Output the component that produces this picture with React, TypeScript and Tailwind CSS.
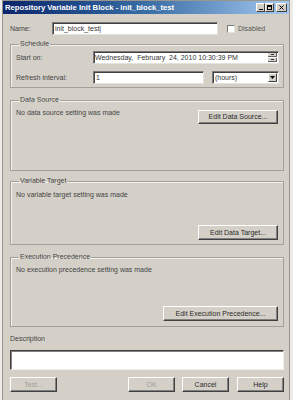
import React from "react";

const F = { fontFamily: '"Liberation Sans", Arial, sans-serif' };

function Btn({ children, className = "", disabled = false }: { children: React.ReactNode; className?: string; disabled?: boolean }) {
  return (
    <div
      className={
        "flex items-center justify-center bg-[#d4d0c8] border border-t-[#ffffff] border-l-[#ffffff] border-r-[#404040] border-b-[#404040] shadow-[inset_-1px_-1px_0_#808080] text-[7px] leading-[8px] " +
        (disabled ? "text-[#a09c94] " : "text-[#2a2a2a] ") +
        className
      }
    >
      {children}
    </div>
  );
}

function Field({ children, className = "" }: { children?: React.ReactNode; className?: string }) {
  return (
    <div
      className={
        "bg-white border border-t-[#7a7a7a] border-l-[#7a7a7a] border-r-[#e4e2dc] border-b-[#e4e2dc] shadow-[inset_1px_1px_0_#404040] flex items-center text-[7px] leading-[8px] text-[#333] " +
        className
      }
    >
      {children}
    </div>
  );
}

function Group({ title, className = "", children }: { title: string; className?: string; children?: React.ReactNode }) {
  return (
    <fieldset className={"border border-[#a4a099] shadow-[inset_1px_1px_0_#f4f2ee] mx-0 " + className}>
      <legend className="ml-[3px] px-[1px] text-[7px] leading-[8px] text-[#444]">{title}</legend>
      {children}
    </fieldset>
  );
}

export default function App() {
  return (
    <div className="w-[293px] h-[400px] bg-[#ecebe7] overflow-hidden" style={F}>
      <div className="ml-[2px] w-[288px] h-[400px] bg-[#d4d0c8] border-l border-r border-t border-[#9a968e] flex flex-col">
        {/* title bar */}
        <div className="h-[13px] flex items-center bg-gradient-to-r from-[#0a246a] via-[#3a6ea5] to-[#a6caf0] pl-[2px] pr-[2px]">
          <span className="text-white font-bold text-[7.7px] leading-[9px] whitespace-nowrap">
            Repository Variable Init Block - init_block_test
          </span>
          <div className="ml-auto flex items-center">
            <div className="w-[9px] h-[9px] bg-[#d4d0c8] border border-t-white border-l-white border-r-[#404040] border-b-[#404040] flex items-end justify-center pb-[1px]">
              <div className="w-[4px] h-[1px] bg-black" />
            </div>
            <div className="w-[9px] h-[9px] bg-[#d4d0c8] border border-t-white border-l-white border-r-[#404040] border-b-[#404040] flex items-center justify-center">
              <div className="w-[5px] h-[5px] border border-black border-t-2" />
            </div>
            <div className="ml-[2px] w-[11px] h-[9px] bg-[#d4d0c8] border border-t-white border-l-white border-r-[#404040] border-b-[#404040] flex items-center justify-center">
              <svg width="5" height="5" viewBox="0 0 5 5">
                <path d="M0.5 0.5 L4.5 4.5 M4.5 0.5 L0.5 4.5" stroke="#000" strokeWidth="1" />
              </svg>
            </div>
          </div>
        </div>

        <div className="flex flex-col pl-[7px] pr-[5px]">
          {/* name row */}
          <div className="mt-[8px] h-[13px] flex items-center">
            <span className="w-[42px] text-[7px] leading-[8px] text-[#444]">Name:</span>
            <Field className="w-[166px] h-[13px] pl-[2px]">init_block_test|</Field>
            <div className="ml-[9px] w-[8px] h-[8px] bg-white border border-t-[#7a7a7a] border-l-[#7a7a7a] border-r-[#e4e2dc] border-b-[#e4e2dc]" />
            <span className="ml-[3px] text-[7px] leading-[8px] text-[#555]">Disabled</span>
          </div>

          {/* schedule */}
          <Group title="Schedule" className="mt-[5px] pl-[5px] pr-[4px] pt-[3px] pb-[3px]">
            <div className="flex items-center h-[13px]">
              <span className="w-[77px] text-[7px] leading-[8px] text-[#444]">Start on:</span>
              <Field className="flex-1 h-[13px] pl-[1px] pr-[1px]">
                <span className="whitespace-nowrap">Wednesday,&nbsp; February&nbsp; 24, 2010 10:30:39 PM</span>
                <div className="ml-auto flex flex-col gap-[1px]">
                  <div className="w-[9px] h-[4px] bg-[#d4d0c8] border-b border-r border-[#606060] flex items-center justify-center">
                    <div className="w-[3px] h-[1px] bg-[#333]" />
                  </div>
                  <div className="w-[9px] h-[4px] bg-[#d4d0c8] border-b border-r border-[#606060] flex items-center justify-center">
                    <div className="w-[3px] h-[1px] bg-[#333]" />
                  </div>
                </div>
              </Field>
            </div>
            <div className="flex items-center h-[13px] mt-[7px]">
              <span className="w-[77px] text-[7px] leading-[8px] text-[#444]">Refresh interval:</span>
              <Field className="w-[111px] h-[13px] pl-[2px]">1</Field>
              <Field className="ml-[8px] flex-1 h-[13px] pl-[2px] pr-[1px]">
                <span>(hours)</span>
                <div className="ml-auto w-[9px] h-[9px] bg-[#d4d0c8] border border-t-white border-l-white border-r-[#404040] border-b-[#404040] flex items-center justify-center">
                  <svg width="5" height="3" viewBox="0 0 5 3">
                    <path d="M0 0 H5 L2.5 3 Z" fill="#000" />
                  </svg>
                </div>
              </Field>
            </div>
          </Group>

          {/* data source */}
          <Group title="Data Source" className="mt-[8px] h-[75px] pl-[5px] pr-[5px] pt-[5px]">
            <div className="flex items-start">
              <span className="text-[7px] leading-[8px] text-[#444]">No data source setting was made</span>
              <Btn className="ml-auto mt-[1px] w-[80px] h-[14px]">Edit Data Source...</Btn>
            </div>
          </Group>

          {/* variable target */}
          <Group title="Variable Target" className="mt-[6px] h-[68px] pl-[5px] pr-[5px] pt-[6px]">
            <div className="flex flex-col">
              <span className="text-[7px] leading-[8px] text-[#444]">No variable target setting was made</span>
              <Btn className="ml-auto mt-[26px] w-[80px] h-[15px]">Edit Data Target...</Btn>
            </div>
          </Group>

          {/* execution precedence */}
          <Group title="Execution Precedence" className="mt-[8px] h-[74px] pl-[5px] pr-[5px] pt-[5px]">
            <div className="flex flex-col">
              <span className="text-[7px] leading-[8px] text-[#444]">No execution precedence setting was made</span>
              <Btn className="ml-auto mt-[32px] w-[115px] h-[15px]">Edit Execution Precedence...</Btn>
            </div>
          </Group>

          {/* description */}
          <span className="mt-[8px] text-[7px] leading-[8px] text-[#444]">Description</span>
          <div className="mt-[7px] h-[20px] bg-white border border-t-[#404040] border-l-[#404040] border-r-[#f0eee8] border-b-[#f0eee8] shadow-[inset_1px_1px_0_#808080]" />

          {/* buttons */}
          <div className="mt-[7px] flex items-center">
            <Btn disabled className="w-[47px] h-[15px]">Test...</Btn>
            <Btn disabled className="ml-auto w-[47px] h-[15px]">OK</Btn>
            <Btn className="ml-[7px] w-[47px] h-[15px]">Cancel</Btn>
            <Btn className="ml-[8px] w-[47px] h-[15px]">Help</Btn>
          </div>
        </div>
      </div>
    </div>
  );
}
